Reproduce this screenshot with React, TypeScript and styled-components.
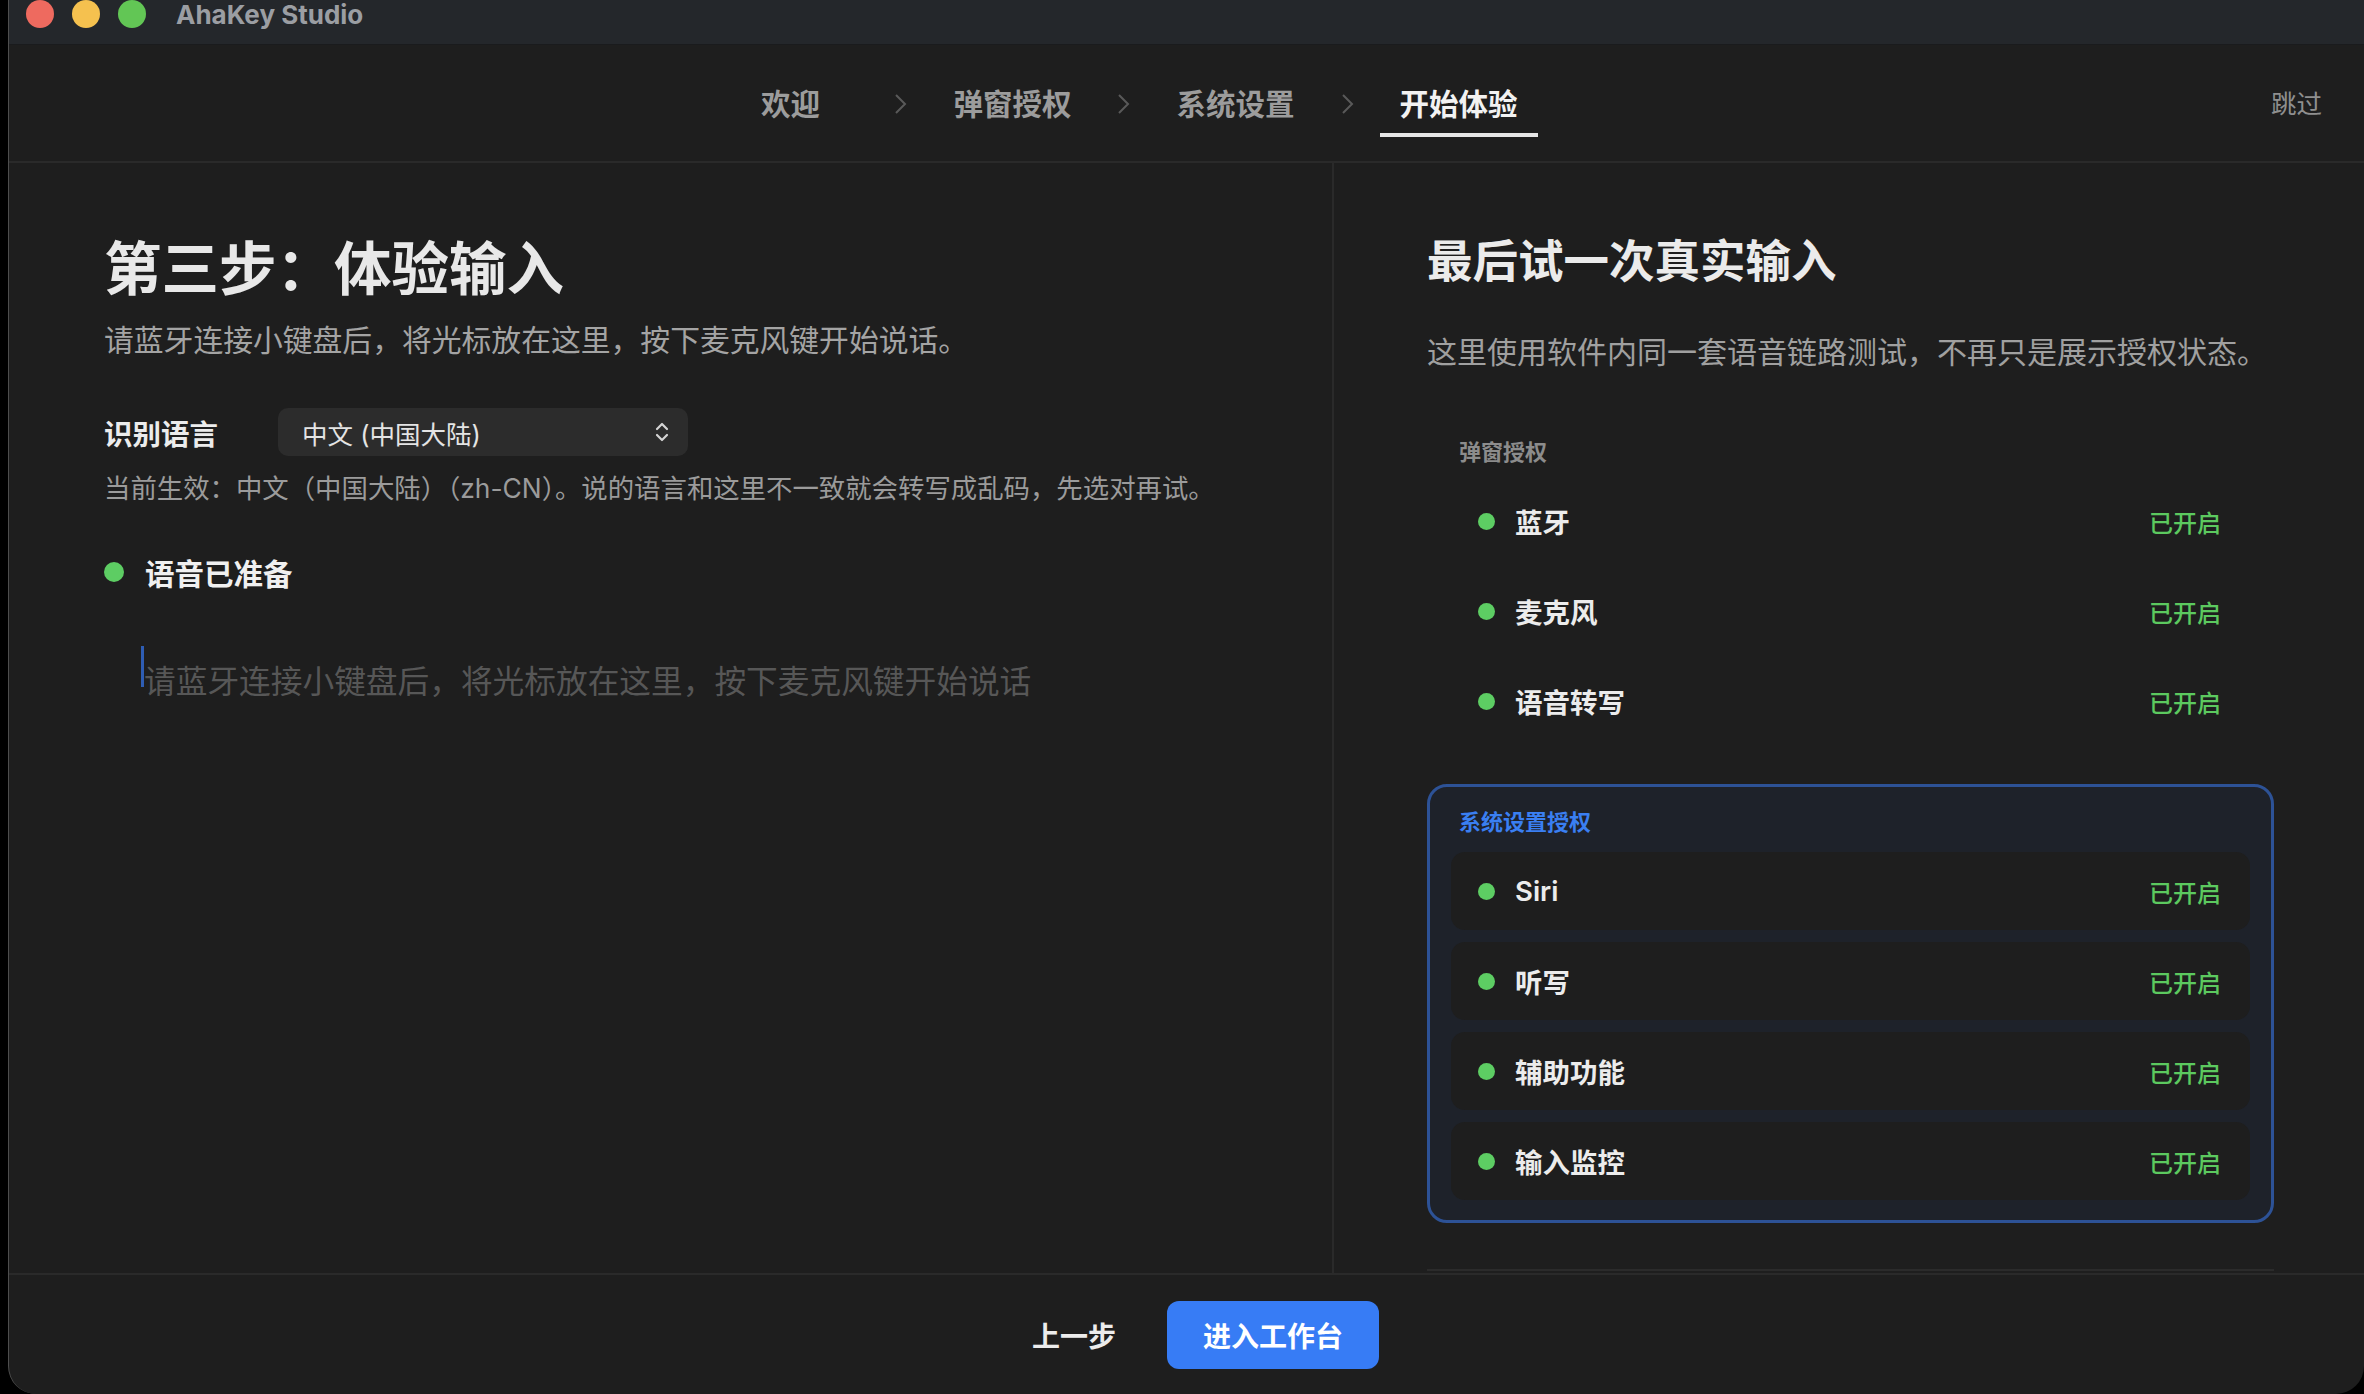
import React from "react";
import styled, { createGlobalStyle, css } from "styled-components";

const GlobalStyle = createGlobalStyle`
  html, body {
    margin: 0;
    padding: 0;
    background: #000;
  }
  body {
    font-family: "Inter", "Noto Sans CJK SC", sans-serif;
    -webkit-font-smoothing: antialiased;
  }
  * {
    box-sizing: border-box;
  }
`;

const steps = ["欢迎", "弹窗授权", "系统设置", "开始体验"];
const popupPerms = ["蓝牙", "麦克风", "语音转写"];
const systemPerms = ["Siri", "听写", "辅助功能", "输入监控"];

const App = () => {
  return (
    <Screen>
      <GlobalStyle />
      <Desktop />
      <Window>
        <TitleBar>
          <Lights>
            <Light color="#ee6a5f" />
            <Light color="#f5c14f" />
            <Light color="#62c655" />
          </Lights>
          <AppTitle>AhaKey Studio</AppTitle>
        </TitleBar>

        <Header>
          <Steps>
            {steps.map((s, i) => (
              <React.Fragment key={s}>
                {i > 0 && (
                  <StepArrow width="13" height="20" viewBox="0 0 13 20">
                    <polyline points="2,1 11,10 2,19" fill="none" stroke="#595959" strokeWidth="2" />
                  </StepArrow>
                )}
                <Step>
                  <StepLabel active={i === steps.length - 1}>{s}</StepLabel>
                  <StepBar active={i === steps.length - 1} />
                </Step>
              </React.Fragment>
            ))}
          </Steps>
          <SkipButton>跳过</SkipButton>
        </Header>

        <Main>
          <LeftPane>
            <Heading>第三步：体验输入</Heading>
            <Lead>请蓝牙连接小键盘后，将光标放在这里，按下麦克风键开始说话。</Lead>
            <LangRow>
              <LangLabel>识别语言</LangLabel>
              <Select>
                <span>中文 (中国大陆)</span>
                <svg width="16" height="24" viewBox="0 0 16 24">
                  <polyline points="3,9 8,4 13,9" fill="none" stroke="#d4d4d4" strokeWidth="2.2" strokeLinecap="round" strokeLinejoin="round" />
                  <polyline points="3,15 8,20 13,15" fill="none" stroke="#d4d4d4" strokeWidth="2.2" strokeLinecap="round" strokeLinejoin="round" />
                </svg>
              </Select>
            </LangRow>
            <Hint>当前生效：中文（中国大陆）（zh-CN）。说的语言和这里不一致就会转写成乱码，先选对再试。</Hint>
            <VoiceStatus>
              <Dot size={20} />
              <span>语音已准备</span>
            </VoiceStatus>
            <Editor>
              <Caret />
              <Placeholder>请蓝牙连接小键盘后，将光标放在这里，按下麦克风键开始说话</Placeholder>
            </Editor>
          </LeftPane>

          <RightPane>
            <SideTitle>最后试一次真实输入</SideTitle>
            <SideLead>这里使用软件内同一套语音链路测试，不再只是展示授权状态。</SideLead>

            <PermGroup>
              <GroupLabel>弹窗授权</GroupLabel>
              {popupPerms.map((p) => (
                <PermRow key={p}>
                  <Dot size={17} />
                  <PermName>{p}</PermName>
                  <PermState>已开启</PermState>
                </PermRow>
              ))}
            </PermGroup>

            <PermGroup highlight>
              <GroupLabel highlight>系统设置授权</GroupLabel>
              {systemPerms.map((p) => (
                <PermRow key={p} filled>
                  <Dot size={17} />
                  <PermName>{p}</PermName>
                  <PermState>已开启</PermState>
                </PermRow>
              ))}
            </PermGroup>

            <MoreSection />
          </RightPane>
        </Main>

        <Footer>
          <BackButton>上一步</BackButton>
          <PrimaryButton>进入工作台</PrimaryButton>
        </Footer>
      </Window>
    </Screen>
  );
};

const Screen = styled.div`
  display: flex;
  height: 100vh;
  overflow: hidden;
`;

const Desktop = styled.div`
  width: 8px;
  flex-shrink: 0;
  background: #000;
`;

const Window = styled.div`
  flex: 1;
  min-width: 0;
  display: flex;
  flex-direction: column;
  background: #1e1e1e;
  border-left: 1px solid #4e4e4e;
  border-radius: 0 0 28px 28px;
  overflow: hidden;
`;

const TitleBar = styled.div`
  height: 45px;
  flex-shrink: 0;
  display: flex;
  align-items: flex-start;
  padding-left: 17px;
  background: #24272b;
  border-bottom: 1px solid #1a1b1d;
`;

const Lights = styled.div`
  display: flex;
  gap: 18px;
`;

const Light = styled.div<{ color: string }>`
  width: 28px;
  height: 28px;
  border-radius: 50%;
  background: ${(p) => p.color};
`;

const AppTitle = styled.div`
  margin-left: 30px;
  line-height: 30px;
  font-size: 26px;
  font-weight: 700;
  color: #9b9ea3;
`;

const Header = styled.div`
  height: 118px;
  flex-shrink: 0;
  display: flex;
  align-items: flex-start;
  padding-top: 39px;
  border-bottom: 2px solid #2a2a2a;
`;

const Steps = styled.nav`
  flex: 1;
  display: flex;
  justify-content: center;
  align-items: flex-start;
`;

const Step = styled.div`
  min-width: 156px;
  padding: 0 20px;
  display: flex;
  flex-direction: column;
  align-items: stretch;
`;

const StepLabel = styled.div<{ active?: boolean }>`
  line-height: 40px;
  text-align: center;
  font-size: 29.5px;
  font-weight: 600;
  color: ${(p) => (p.active ? "#f2f2f2" : "#9c9c9c")};
`;

const StepBar = styled.div<{ active?: boolean }>`
  height: 4px;
  margin: 9px -20px 0;
  background: ${(p) => (p.active ? "#e6e6e6" : "transparent")};
`;

const StepArrow = styled.svg`
  margin: 10px 26px 0;
  flex-shrink: 0;
`;

const SkipButton = styled.button`
  background: none;
  border: none;
  padding: 0 42px 0 30px;
  line-height: 40px;
  font-family: inherit;
  font-size: 25.5px;
  color: #8f8f8f;
`;

const Main = styled.div`
  flex: 1;
  min-height: 0;
  display: grid;
  grid-template-columns: minmax(0, 1fr) 1030px;
`;

const LeftPane = styled.section`
  display: flex;
  flex-direction: column;
  padding: 70px 60px 0 95px;
  border-right: 2px solid #2a2a2a;
`;

const Heading = styled.h1`
  margin: 0;
  font-size: 57.5px;
  line-height: 73px;
  font-weight: 700;
  color: #e8e8e8;
`;

const Lead = styled.p`
  margin: 12px 0 0;
  font-size: 29.8px;
  line-height: 44px;
  color: #a4a4a4;
`;

const LangRow = styled.div`
  margin-top: 46px;
  display: flex;
  align-items: center;
  gap: 60px;
`;

const LangLabel = styled.div`
  font-size: 28.5px;
  font-weight: 700;
  color: #ececec;
`;

const Select = styled.div`
  width: 410px;
  height: 48px;
  display: flex;
  align-items: center;
  justify-content: space-between;
  padding: 0 18px 0 24px;
  border-radius: 10px;
  background: #2c2c2c;
  font-size: 25.5px;
  color: #e4e4e4;
`;

const Hint = styled.p`
  margin: 12px 0 0;
  font-size: 26.4px;
  line-height: 40px;
  color: #9b9b9b;
`;

const VoiceStatus = styled.div`
  margin-top: 46px;
  height: 36px;
  display: flex;
  align-items: center;
  gap: 21px;
  font-size: 29.5px;
  font-weight: 700;
  color: #f0f0f0;
`;

const Dot = styled.span<{ size: number }>`
  width: ${(p) => p.size}px;
  height: ${(p) => p.size}px;
  flex-shrink: 0;
  border-radius: 50%;
  background: #5dcd63;
`;

const Editor = styled.div`
  flex: 1;
  display: flex;
  align-items: flex-start;
  margin-top: 40px;
  padding-left: 37px;
`;

const Caret = styled.span`
  width: 3px;
  height: 41px;
  margin-top: 16px;
  background: #2e5db4;
  flex-shrink: 0;
`;

const Placeholder = styled.div`
  margin-top: 28px;
  font-size: 31.7px;
  line-height: 48px;
  color: #575757;
`;

const RightPane = styled.aside`
  overflow: hidden;
  padding: 70px 90px 0 93px;
`;

const SideTitle = styled.h2`
  margin: 0;
  font-size: 45.5px;
  line-height: 58px;
  font-weight: 700;
  color: #ebebeb;
`;

const SideLead = styled.p`
  margin: 39px 0 0;
  font-size: 30px;
  line-height: 44px;
  color: #a0a0a0;
`;

const PermGroup = styled.div<{ highlight?: boolean }>`
  margin-top: ${(p) => (p.highlight ? "21px" : "40px")};
  padding: 20px 21px;
  border-radius: 20px;
  border: 3px solid transparent;
  display: flex;
  flex-direction: column;
  gap: 12px;
  ${(p) =>
    p.highlight &&
    css`
      border-color: #2d5296;
      background: #1e222a;
    `}
`;

const GroupLabel = styled.div<{ highlight?: boolean }>`
  padding-left: 8px;
  margin-bottom: 3px;
  line-height: 30px;
  font-size: 22px;
  font-weight: 600;
  color: ${(p) => (p.highlight ? "#3a7ff2" : "#8c8c8c")};
`;

const PermRow = styled.div<{ filled?: boolean }>`
  height: 78px;
  display: flex;
  align-items: center;
  gap: 20px;
  padding: 0 29px 0 27px;
  border-radius: 14px;
  background: ${(p) => (p.filled ? "#1e1e1e" : "transparent")};
`;

const PermName = styled.span`
  flex: 1;
  font-size: 27.5px;
  font-weight: 600;
  color: #ececec;
`;

const PermState = styled.span`
  font-size: 24px;
  font-weight: 500;
  color: #5cc95f;
`;

const MoreSection = styled.div`
  margin-top: 46px;
  height: 60px;
  border-top: 2px solid #2b2b2b;
`;

const Footer = styled.footer`
  height: 121px;
  flex-shrink: 0;
  display: flex;
  align-items: center;
  justify-content: center;
  gap: 23px;
  padding-left: 10px;
  border-top: 2px solid #2a2a2a;
`;

const BackButton = styled.button`
  height: 68px;
  padding: 0 28px;
  border: none;
  background: transparent;
  font-family: inherit;
  font-size: 28px;
  font-weight: 600;
  color: #ececec;
`;

const PrimaryButton = styled.button`
  height: 68px;
  padding: 0 36px;
  border: none;
  border-radius: 12px;
  background: #377cf5;
  font-family: inherit;
  font-size: 28px;
  font-weight: 700;
  color: #fff;
`;

export default App;
